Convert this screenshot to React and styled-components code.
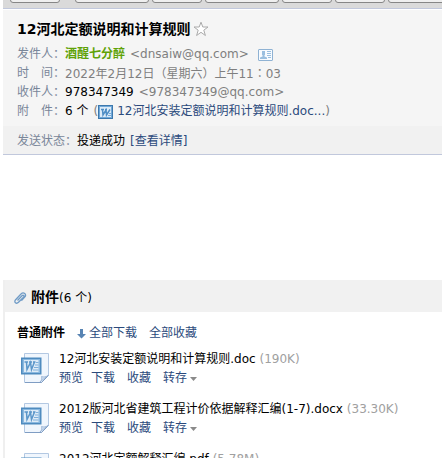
import React from 'react';
import styled, { createGlobalStyle } from 'styled-components';

const GlobalStyle = createGlobalStyle`
*{
    box-sizing: border-box;
}

body {
    margin: 0;
    background-color: #fff;
    color: #000;
    font: 12px/19px "DejaVu Sans", "Noto Sans CJK SC", sans-serif;
    overflow: hidden;
}
`

const Page = styled.div`
height: 100vh;
padding-left: 3px;
overflow: hidden;
white-space: nowrap;
`

const Toolbar = styled.div`
display: flex;
align-items: flex-end;
gap: 3px;
height: 9px;
padding: 0 0 5px 7px;
background-color: #dadada;
border-bottom: 1px solid #c1c8dc;
`

const ToolButton = styled.button`
flex: none;
width: ${(props) => (props.$wide ? '74px' : '50px')};
height: 22px;
margin-right: ${(props) => (props.$apart ? '12px' : '0')};
border: 1px solid #868686;
border-radius: 3px;
background-color: #efefef;
`

const MailInfo = styled.header`
margin-top: 1px;
padding: 9px 14px 5px;
background-color: #f5f5f5;
`

const Subject = styled.h1`
display: flex;
align-items: center;
gap: 3px;
margin: 0 0 6px;
font-size: 14px;
line-height: 20px;
`

const Row = styled.div`
display: flex;
align-items: center;
height: 19px;
color: #7f7f7f;
`

const Value = styled.span`
display: flex;
align-items: center;
gap: ${(props) => props.$gap || '5px'};
`

const Label = styled.span`
display: flex;
justify-content: space-between;
width: 48px;
color: #798699;
`

const Sender = styled.b`
color: #5fa207;
`

const Dark = styled.span`
color: #000;
`

const Link = styled.a`
color: #2b4a7c;
text-decoration: none;
`

const Colon = styled.span`
font-family: "Noto Sans CJK TC", sans-serif;
`

const IconButton = styled.button`
display: flex;
margin-left: ${(props) => (props.$apart ? '4px' : '0')};
padding: 0;
border: none;
background: none;
`

const Status = styled.div`
display: flex;
padding: 6px 14px 3px;
background-color: #f1f1f1;
border-bottom: 1px solid #c1c8dc;
color: #798699;
`

const Attachments = styled.section`
margin-top: 125px;
border-left: 2px solid #efefef;
`

const AttachTitle = styled.h2`
display: flex;
align-items: center;
gap: 4px;
height: 32px;
margin: 0;
padding: 4px 0 0 8px;
background-color: #f1f1f1;
font-size: 12px;
font-weight: normal;

b {
    font-size: 14px;
}
`

const GroupBar = styled.div`
display: flex;
align-items: center;
gap: 12px;
padding: 12px 12px 0;
`

const IconLink = styled(Link)`
display: flex;
align-items: center;
gap: 3px;
`

const FileList = styled.ul`
margin: 0;
padding: 7px 0 0 16px;
list-style: none;
`

const FileItem = styled.li`
display: flex;
gap: 10px;
height: 50px;
`

const FileIcon = styled.svg`
flex: none;
margin-top: 3px;
`

const Size = styled.span`
color: #a0a0a0;
`

const Actions = styled.div`
display: flex;
gap: 12px;

a:first-child {
    margin-right: -4px;
}
`

const files = [
  { name: '12河北安装定额说明和计算规则.doc', size: '190K' },
  { name: '2012版河北省建筑工程计价依据解释汇编(1-7).docx', size: '33.30K' },
  { name: '2012河北定额解释汇编.pdf', size: '5.78M' },
];

function Star() {
  return (
    <svg width="16" height="16" viewBox="0 0 16 16" aria-hidden="true">
      <path d="M8 1.2 9.8 6H15l-4.2 3.2 1.6 5.3L8 11.3l-4.4 3.2 1.6-5.3L1 6h5.2z" fill="#fff" stroke="#aaa" />
    </svg>
  )
}

function Card() {
  return (
    <svg width="15" height="12" viewBox="0 0 15 12" aria-hidden="true">
      <rect x=".5" y=".5" width="14" height="11" rx=".5" fill="#f7fbff" stroke="#8fb2d3" />
      <path d="M4 2h3v4H6.500v1.500L9 8.500V10H2V8.500L4.500 7.500V6H4z" fill="#9abfe0" />
      <path d="M9 2.5h4M9 4.5h4M9 6.5h4M10 8.5h3" stroke="#9abfe0" />
    </svg>
  )
}

function WordBadge() {
  return (
    <svg width="15" height="14" viewBox="0 0 15 14" aria-hidden="true">
      <rect x=".5" y=".5" width="14" height="13" fill="#72a9d9" stroke="#3c78ad" />
      <rect x="2" y="2" width="11" height="10" fill="#dcebf8" />
      <path d="M3 4.5h3M7 4.5h2M4.5 4.500 5 10l3-5 .5 5L12 4.500" fill="none" stroke="#4f8ec5" strokeWidth="1.5" />
      <path d="M11 8.500h2M10 10.500h3" stroke="#72a9d9" />
    </svg>
  )
}

function Clip() {
  return (
    <svg width="14" height="14" viewBox="0 0 14 14" aria-hidden="true">
      <path d="M4.5 9.5 9 4.8c1.3-1.3 2.7.1 1.5 1.4l-5 5.1c-2.2 2.2-5-.3-2.9-2.6L8 3c2.6-2.6 6 .4 3.7 3.1L8.5 9.5" fill="none" stroke="#6f9bc6" strokeWidth="1.3" />
    </svg>
  )
}

function DownArrow() {
  return (
    <svg width="9" height="10" viewBox="0 0 9 10" aria-hidden="true">
      <path d="M3 0h3v5h3L4.5 9.5 0 5h3z" fill="#5884b3" />
    </svg>
  )
}

function WordFile() {
  return (
    <FileIcon width="28" height="31" viewBox="0 0 28 31" aria-hidden="true">
      <path d="M3.5.5h24v22l-7 7h-17z" fill="#f0f6fd" stroke="#b3c8e2" />
      <path d="M4 29.5h16.500l7-7" fill="none" stroke="#7f9dc3" />
      <path d="M19 29c2-2 2-3.5 1.5-5.5 2 .8 4.5.5 6.500-1z" fill="#d0e0f2" stroke="#93afd2" strokeWidth=".8" />
      <rect x=".75" y="5.25" width="19" height="15.5" fill="#8ab9e0" stroke="#4f8bbf" strokeWidth="1.5" />
      <rect x="3" y="7" width="14.500" height="12" fill="#deebf7" />
      <path d="M3.500 9h3.500M8 9h3M12 9h2.500M5.500 9 6 16.500 9.500 9.500 10.500 16.500 13.500 9" fill="none" stroke="#5b96c9" strokeWidth="1.5" />
      <path d="M15 9.500h2.500M14 12h3.500M13 14.500h4.500M12 17h5.500" stroke="#7caeda" />
    </FileIcon>
  )
}

function Caret() {
  return (
    <svg width="7" height="4" viewBox="0 0 7 4" aria-hidden="true">
      <path d="M0 0h7L3.5 4z" fill="#8a8a8a" />
    </svg>
  )
}

export default function App() {
  return (
    <Page>
      <GlobalStyle />
      <Toolbar>
        <ToolButton type="button" $apart />
        <ToolButton type="button" $wide />
        <ToolButton type="button" />
        <ToolButton type="button" $wide />
        <ToolButton type="button" />
        <ToolButton type="button" />
        <ToolButton type="button" $wide />
      </Toolbar>
      <MailInfo>
        <Subject>
          12河北定额说明和计算规则
          <IconButton type="button"><Star /></IconButton>
        </Subject>
        <Row>
          <Label>发件人：</Label>
          <Value>
            <Sender>酒醒七分醉</Sender>
            <span>&lt;dnsaiw@qq.com&gt;</span>
            <IconButton type="button" $apart><Card /></IconButton>
          </Value>
        </Row>
        <Row>
          <Label><span>时</span><span>间：</span></Label>
          <span>2022年2月12日（星期六）上午11<Colon>：</Colon>03</span>
        </Row>
        <Row>
          <Label>收件人：</Label>
          <Value>
            <Dark>978347349</Dark>
            <span>&lt;978347349@qq.com&gt;</span>
          </Value>
        </Row>
        <Row>
          <Label><span>附</span><span>件：</span></Label>
          <Value>
            <Dark>6 个</Dark>
            <Value $gap="4px">
              <Value $gap="0">(<WordBadge /></Value>
              <span><Link href="#attachments">12河北安装定额说明和计算规则.doc...</Link>)</span>
            </Value>
          </Value>
        </Row>
      </MailInfo>
      <Status>
        <span>发送状态：</span>
        <Value>
          <Dark>投递成功</Dark>
          <Link href="#status">[查看详情]</Link>
        </Value>
      </Status>
      <Attachments id="attachments">
        <AttachTitle>
          <Clip />
          <span><b>附件</b>(6 个)</span>
        </AttachTitle>
        <GroupBar>
          <b>普通附件</b>
          <IconLink href="#download-all"><DownArrow />全部下载</IconLink>
          <Link href="#save-all">全部收藏</Link>
        </GroupBar>
        <FileList>
          {files.map((file) => (
            <FileItem key={file.name}>
              <WordFile />
              <div>
                <div>{file.name} <Size>({file.size})</Size></div>
                <Actions>
                  <Link href="#preview">预览</Link>
                  <Link href="#download">下载</Link>
                  <Link href="#favorite">收藏</Link>
                  <IconLink href="#save">转存<Caret /></IconLink>
                </Actions>
              </div>
            </FileItem>
          ))}
        </FileList>
      </Attachments>
    </Page>
  )
}
